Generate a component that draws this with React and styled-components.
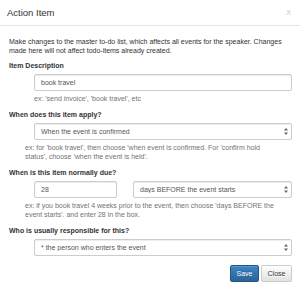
import React from "react";
import styled, { createGlobalStyle } from "styled-components";

const Global = createGlobalStyle`
  html, body { margin: 0; padding: 0; background: #fff; }
  body {
    font-family: "Liberation Sans", Arial, Helvetica, sans-serif;
    font-size: 7px;
    color: #333;
  }
  * { box-sizing: border-box; }
`;

const Modal = styled.div`
  width: 300px;
  background: #fff;
`;

const Header = styled.div`
  display: flex;
  align-items: center;
  justify-content: space-between;
  height: 26px;
  padding: 0 9px 1px 7px;
  border-bottom: 1px solid #e5e5e5;
`;

const Title = styled.h4`
  margin: 0;
  font-size: 9.5px;
  font-weight: 500;
  line-height: 13px;
  color: #333;
`;

const CloseX = styled.button`
  border: 0;
  background: none;
  padding: 0;
  font-family: inherit;
  font-size: 7px;
  line-height: 1;
  color: #c4c4c4;
  cursor: pointer;
`;

const Body = styled.div`
  padding: 11px 8px 0 9px;
`;

const Intro = styled.p`
  margin: 0 0 6px;
  line-height: 9px;
  color: #333;
`;

const Group = styled.div`
  margin-bottom: ${(p) => (p.$last ? "0" : "7px")};
`;

const Label = styled.label`
  display: block;
  font-weight: bold;
  line-height: 10px;
  margin-bottom: 3px;
  color: #333;
`;

const Control = styled.div`
  margin-left: 25px;
`;

const TextInput = styled.input`
  display: block;
  width: 100%;
  height: 17px;
  padding: 0 6px;
  font-family: inherit;
  font-size: 7px;
  color: #555;
  background: #fff;
  border: 1px solid #ccc;
  border-radius: 2px;
  box-shadow: inset 0 1px 1px rgba(0, 0, 0, 0.075);
  outline: none;
`;

const SelectWrap = styled.div`
  position: relative;
  width: 100%;
`;

const Select = styled.select`
  display: block;
  width: 100%;
  height: 17px;
  padding: 0 12px 0 6px;
  font-family: inherit;
  font-size: 7px;
  color: #555;
  background: #fff;
  border: 1px solid #ccc;
  border-radius: 2px;
  box-shadow: inset 0 1px 1px rgba(0, 0, 0, 0.075);
  appearance: none;
  -webkit-appearance: none;
  outline: none;
`;

const Arrows = styled.svg`
  position: absolute;
  right: 4px;
  top: 5px;
  pointer-events: none;
`;

const DueRow = styled.div`
  display: grid;
  grid-template-columns: 83px 1fr;
  gap: 16px;
  margin-left: 25px;
`;

const Help = styled.p`
  margin: 3px 0 0 ${(p) => (p.$indent ? "25px" : "16px")};
  line-height: 9px;
  color: #737373;
`;

const Footer = styled.div`
  display: flex;
  justify-content: flex-end;
  gap: 2px;
  padding: 9px 8px 0 0;
`;

const Btn = styled.button`
  height: 17px;
  width: ${(p) => p.$w}px;
  padding: 0;
  font-family: inherit;
  font-size: 7px;
  border-radius: 2px;
  cursor: pointer;
  color: ${(p) => (p.$primary ? "#fff" : "#333")};
  border: 1px solid ${(p) => (p.$primary ? "#245580" : "#ccc")};
  background: ${(p) =>
    p.$primary
      ? "linear-gradient(to bottom, #3c85c6 0%, #2a6399 100%)"
      : "linear-gradient(to bottom, #fff 0%, #e0e0e0 100%)"};
  text-shadow: ${(p) =>
    p.$primary ? "0 -1px 0 rgba(0,0,0,0.2)" : "0 1px 0 #fff"};
  box-shadow: inset 0 1px 0 rgba(255, 255, 255, 0.15),
    0 1px 1px rgba(0, 0, 0, 0.075);
`;

function SelectField({ value }) {
  return (
    <SelectWrap>
      <Select defaultValue={value}>
        <option>{value}</option>
      </Select>
      <Arrows width="4" height="7" viewBox="0 0 4 7">
        <path d="M2 0 L4 2.6 L0 2.6 Z" fill="#666" />
        <path d="M2 7 L4 4.4 L0 4.4 Z" fill="#666" />
      </Arrows>
    </SelectWrap>
  );
}

export default function App() {
  return (
    <>
      <Global />
      <Modal>
        <Header>
          <Title>Action Item</Title>
          <CloseX aria-label="Close">X</CloseX>
        </Header>
        <Body>
          <Intro>
            Make changes to the master to-do list, which affects all events for
            the speaker. Changes made here will not affect todo-items already
            created.
          </Intro>

          <Group>
            <Label>Item Description</Label>
            <Control>
              <TextInput defaultValue="book travel" />
            </Control>
            <Help $indent>ex: 'send invoice', 'book travel', etc</Help>
          </Group>

          <Group>
            <Label>When does this item apply?</Label>
            <Control>
              <SelectField value="When the event is confirmed" />
            </Control>
            <Help>
              ex: for 'book travel', then choose 'when event is confirmed. For
              'confirm hold
              <br />
              status', choose 'when the event is held'.
            </Help>
          </Group>

          <Group>
            <Label>When is this item normally due?</Label>
            <DueRow>
              <TextInput defaultValue="28" />
              <SelectField value="days BEFORE the event starts" />
            </DueRow>
            <Help>
              ex: if you book travel 4 weeks prior to the event, then choose
              'days BEFORE the event starts'. and enter 28 in the box.
            </Help>
          </Group>

          <Group $last>
            <Label>Who is usually responsible for this?</Label>
            <Control>
              <SelectField value="* the person who enters the event" />
            </Control>
          </Group>
        </Body>
        <Footer>
          <Btn $primary $w={29}>Save</Btn>
          <Btn $w={31}>Close</Btn>
        </Footer>
      </Modal>
    </>
  );
}
